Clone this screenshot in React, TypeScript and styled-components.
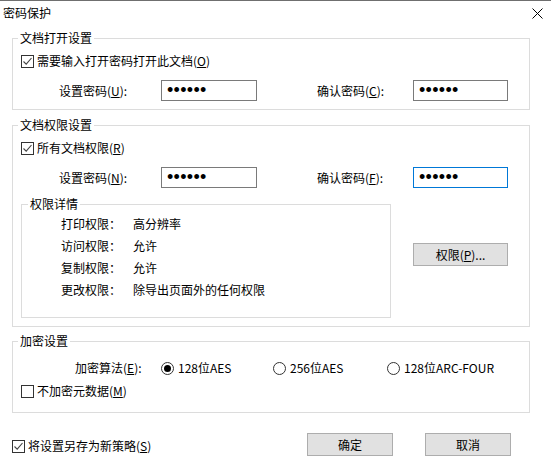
import React from "react";
import styled, { createGlobalStyle } from "styled-components";

const GlobalStyle = createGlobalStyle`
  html, body {
    margin: 0;
    padding: 0;
    background: #ffffff;
  }
  body {
    font-family: "Noto Sans CJK SC", "Noto Sans", sans-serif;
    font-size: 12px;
    color: #000000;
  }
`;

const Window = styled.div`
  width: 551px;
  height: 469px;
  box-sizing: border-box;
  border-top: 1px solid #6f6f6f;
  background: #ffffff;
  display: flex;
  flex-direction: column;
`;

const TitleBar = styled.div`
  height: 23px;
  display: flex;
  align-items: center;
  justify-content: space-between;
  padding: 0 8px 0 3px;
  line-height: 16px;
`;

const CloseButton = styled.div`
  width: 11px;
  height: 11px;
  margin-top: 2px;
  display: flex;
`;

const Content = styled.div`
  display: flex;
  flex-direction: column;
  padding: 0 21px 0 12px;
`;

const Group = styled.fieldset<{ $top: number; $grow?: boolean }>`
  margin: ${(p) => p.$top}px 0 0 0;
  padding: 0;
  border: 1px solid #dcdcdc;
  min-width: 0;
  flex: ${(p) => (p.$grow ? "0 0 368px" : "none")};
`;

const Legend = styled.legend<{ $indent: number }>`
  margin-left: ${(p) => p.$indent}px;
  padding: 0 2px;
  line-height: 16px;
  font-size: 12px;
`;

const GroupBody = styled.div<{ $pt: number; $pb: number; $pl: number }>`
  display: flex;
  flex-direction: column;
  padding: ${(p) => p.$pt}px 0 ${(p) => p.$pb}px ${(p) => p.$pl}px;
`;

const CheckRow = styled.label<{ $mt?: number }>`
  display: flex;
  align-items: center;
  height: 20px;
  gap: 3px;
  margin-top: ${(p) => p.$mt ?? 0}px;
  line-height: 16px;
  white-space: nowrap;
`;

const Box = styled.span`
  width: 13px;
  height: 13px;
  box-sizing: border-box;
  border: 1px solid #333333;
  background: #ffffff;
  display: flex;
  align-items: center;
  justify-content: center;
  flex: none;
`;

const Key = styled.span`
  text-decoration: underline;
  text-underline-offset: 1px;
`;

const FieldRow = styled.div`
  display: flex;
  align-items: center;
  height: 21px;
  margin-top: 9px;
`;

const FieldLabel = styled.span<{ $ml: number; $w: number }>`
  margin-left: ${(p) => p.$ml}px;
  width: ${(p) => p.$w}px;
  flex: none;
  line-height: 16px;
  white-space: nowrap;
`;

const Password = styled.input<{ $focus?: boolean; $w: number }>`
  width: ${(p) => p.$w}px;
  height: 21px;
  box-sizing: border-box;
  margin: 0;
  padding: 0 0 0 5px;
  border: 1px solid ${(p) => (p.$focus ? "#0078d7" : "#7a7a7a")};
  outline: none;
  background: #ffffff;
  font-family: "Liberation Sans", sans-serif;
  font-size: 18px;
  letter-spacing: 0.3px;
  color: #000000;
  flex: none;
`;

const DetailsRow = styled.div`
  display: flex;
  align-items: flex-start;
  margin-top: 8px;
  gap: 22px;
`;

const Detail = styled.div`
  display: flex;
  align-items: center;
  height: 22px;
  padding-left: 39px;
  line-height: 16px;
  white-space: nowrap;
`;

const DetailKey = styled.span`
  width: 72px;
  flex: none;
`;

const Button = styled.button<{ $w: number; $mt?: number }>`
  width: ${(p) => p.$w}px;
  height: 23px;
  margin: ${(p) => p.$mt ?? 0}px 0 0 0;
  padding: 0;
  box-sizing: border-box;
  background: #e1e1e1;
  border: 1px solid #adadad;
  border-radius: 0;
  font-family: "Noto Sans CJK SC", "Noto Sans", sans-serif;
  font-size: 12px;
  line-height: 16px;
  color: #000000;
  flex: none;
`;

const RadioRow = styled.div`
  display: flex;
  align-items: center;
  height: 20px;
`;

const RadioItem = styled.label<{ $w: number }>`
  display: flex;
  align-items: center;
  gap: 4px;
  width: ${(p) => p.$w}px;
  flex: none;
  line-height: 16px;
  white-space: nowrap;
`;

const Circle = styled.span<{ $on?: boolean }>`
  width: 13px;
  height: 13px;
  box-sizing: border-box;
  border: 1px solid #333333;
  border-radius: 50%;
  display: flex;
  align-items: center;
  justify-content: center;
  flex: none;
  &::after {
    content: "";
    display: ${(p) => (p.$on ? "block" : "none")};
    width: 7px;
    height: 7px;
    border-radius: 50%;
    background: #000000;
  }
`;

const Footer = styled.div`
  display: flex;
  align-items: center;
  margin-top: 20px;
  height: 23px;
`;

const FooterCheck = styled.div`
  flex: 1;
  padding-top: 3px;
`;

const FooterButtons = styled.div`
  display: flex;
  gap: 32px;
  margin-right: 19px;
`;

const Check = () => (
  <svg width="11" height="11" viewBox="0 0 11 11">
    <path d="M1.5 5.5 L4.2 8.2 L9.5 2" fill="none" stroke="#444" strokeWidth="1.1" />
  </svg>
);

const CheckBox: React.FC<{ checked?: boolean; mt?: number; children: React.ReactNode }> = ({
  checked,
  mt,
  children,
}) => (
  <CheckRow $mt={mt}>
    <Box>{checked && <Check />}</Box>
    <span>{children}</span>
  </CheckRow>
);

const details: [string, string][] = [
  ["打印权限：", "高分辨率"],
  ["访问权限：", "允许"],
  ["复制权限：", "允许"],
  ["更改权限：", "除导出页面外的任何权限"],
];

export default function App() {
  return (
    <>
      <GlobalStyle />
      <Window>
        <TitleBar>
          <span>密码保护</span>
          <CloseButton>
            <svg width="11" height="11" viewBox="0 0 11 11">
              <path d="M0.5 0.5 L10.5 10.5 M10.5 0.5 L0.5 10.5" stroke="#000" strokeWidth="1" />
            </svg>
          </CloseButton>
        </TitleBar>
        <Content>
          <Group $top={6}>
            <Legend $indent={5}>文档打开设置</Legend>
            <GroupBody $pt={5} $pb={8} $pl={8}>
              <CheckBox checked>
                需要输入打开密码打开此文档(<Key>O</Key>)
              </CheckBox>
              <FieldRow>
                <FieldLabel $ml={38} $w={102}>
                  设置密码(<Key>U</Key>):
                </FieldLabel>
                <Password type="password" readOnly value="123456" $w={96} />
                <FieldLabel $ml={60} $w={96}>
                  确认密码(<Key>C</Key>):
                </FieldLabel>
                <Password type="password" readOnly value="123456" $w={95} />
              </FieldRow>
            </GroupBody>
          </Group>

          <Group $top={7}>
            <Legend $indent={5}>文档权限设置</Legend>
            <GroupBody $pt={5} $pb={8} $pl={8}>
              <CheckBox checked>
                所有文档权限(<Key>R</Key>)
              </CheckBox>
              <FieldRow>
                <FieldLabel $ml={38} $w={102}>
                  设置密码(<Key>N</Key>):
                </FieldLabel>
                <Password type="password" readOnly value="123456" $w={96} />
                <FieldLabel $ml={60} $w={96}>
                  确认密码(<Key>F</Key>):
                </FieldLabel>
                <Password type="password" readOnly value="123456" $w={95} $focus />
              </FieldRow>
              <DetailsRow>
                <Group $top={0} $grow>
                  <Legend $indent={6}>权限详情</Legend>
                  <GroupBody $pt={1} $pb={16} $pl={0}>
                    {details.map(([k, v]) => (
                      <Detail key={k}>
                        <DetailKey>{k}</DetailKey>
                        <span>{v}</span>
                      </Detail>
                    ))}
                  </GroupBody>
                </Group>
                <Button $w={95} $mt={47}>
                  权限(<Key>P</Key>)...
                </Button>
              </DetailsRow>
            </GroupBody>
          </Group>

          <Group $top={6}>
            <Legend $indent={5}>加密设置</Legend>
            <GroupBody $pt={9} $pb={11} $pl={8}>
              <RadioRow>
                <FieldLabel $ml={54} $w={86}>
                  加密算法(<Key>E</Key>):
                </FieldLabel>
                <RadioItem $w={112}>
                  <Circle $on />
                  128位AES
                </RadioItem>
                <RadioItem $w={114}>
                  <Circle />
                  256位AES
                </RadioItem>
                <RadioItem $w={120}>
                  <Circle />
                  128位ARC-FOUR
                </RadioItem>
              </RadioRow>
              <CheckBox mt={3}>
                不加密元数据(<Key>M</Key>)
              </CheckBox>
            </GroupBody>
          </Group>

          <Footer>
            <FooterCheck>
              <CheckBox checked>
                将设置另存为新策略(<Key>S</Key>)
              </CheckBox>
            </FooterCheck>
            <FooterButtons>
              <Button $w={86}>确定</Button>
              <Button $w={86}>取消</Button>
            </FooterButtons>
          </Footer>
        </Content>
      </Window>
    </>
  );
}
